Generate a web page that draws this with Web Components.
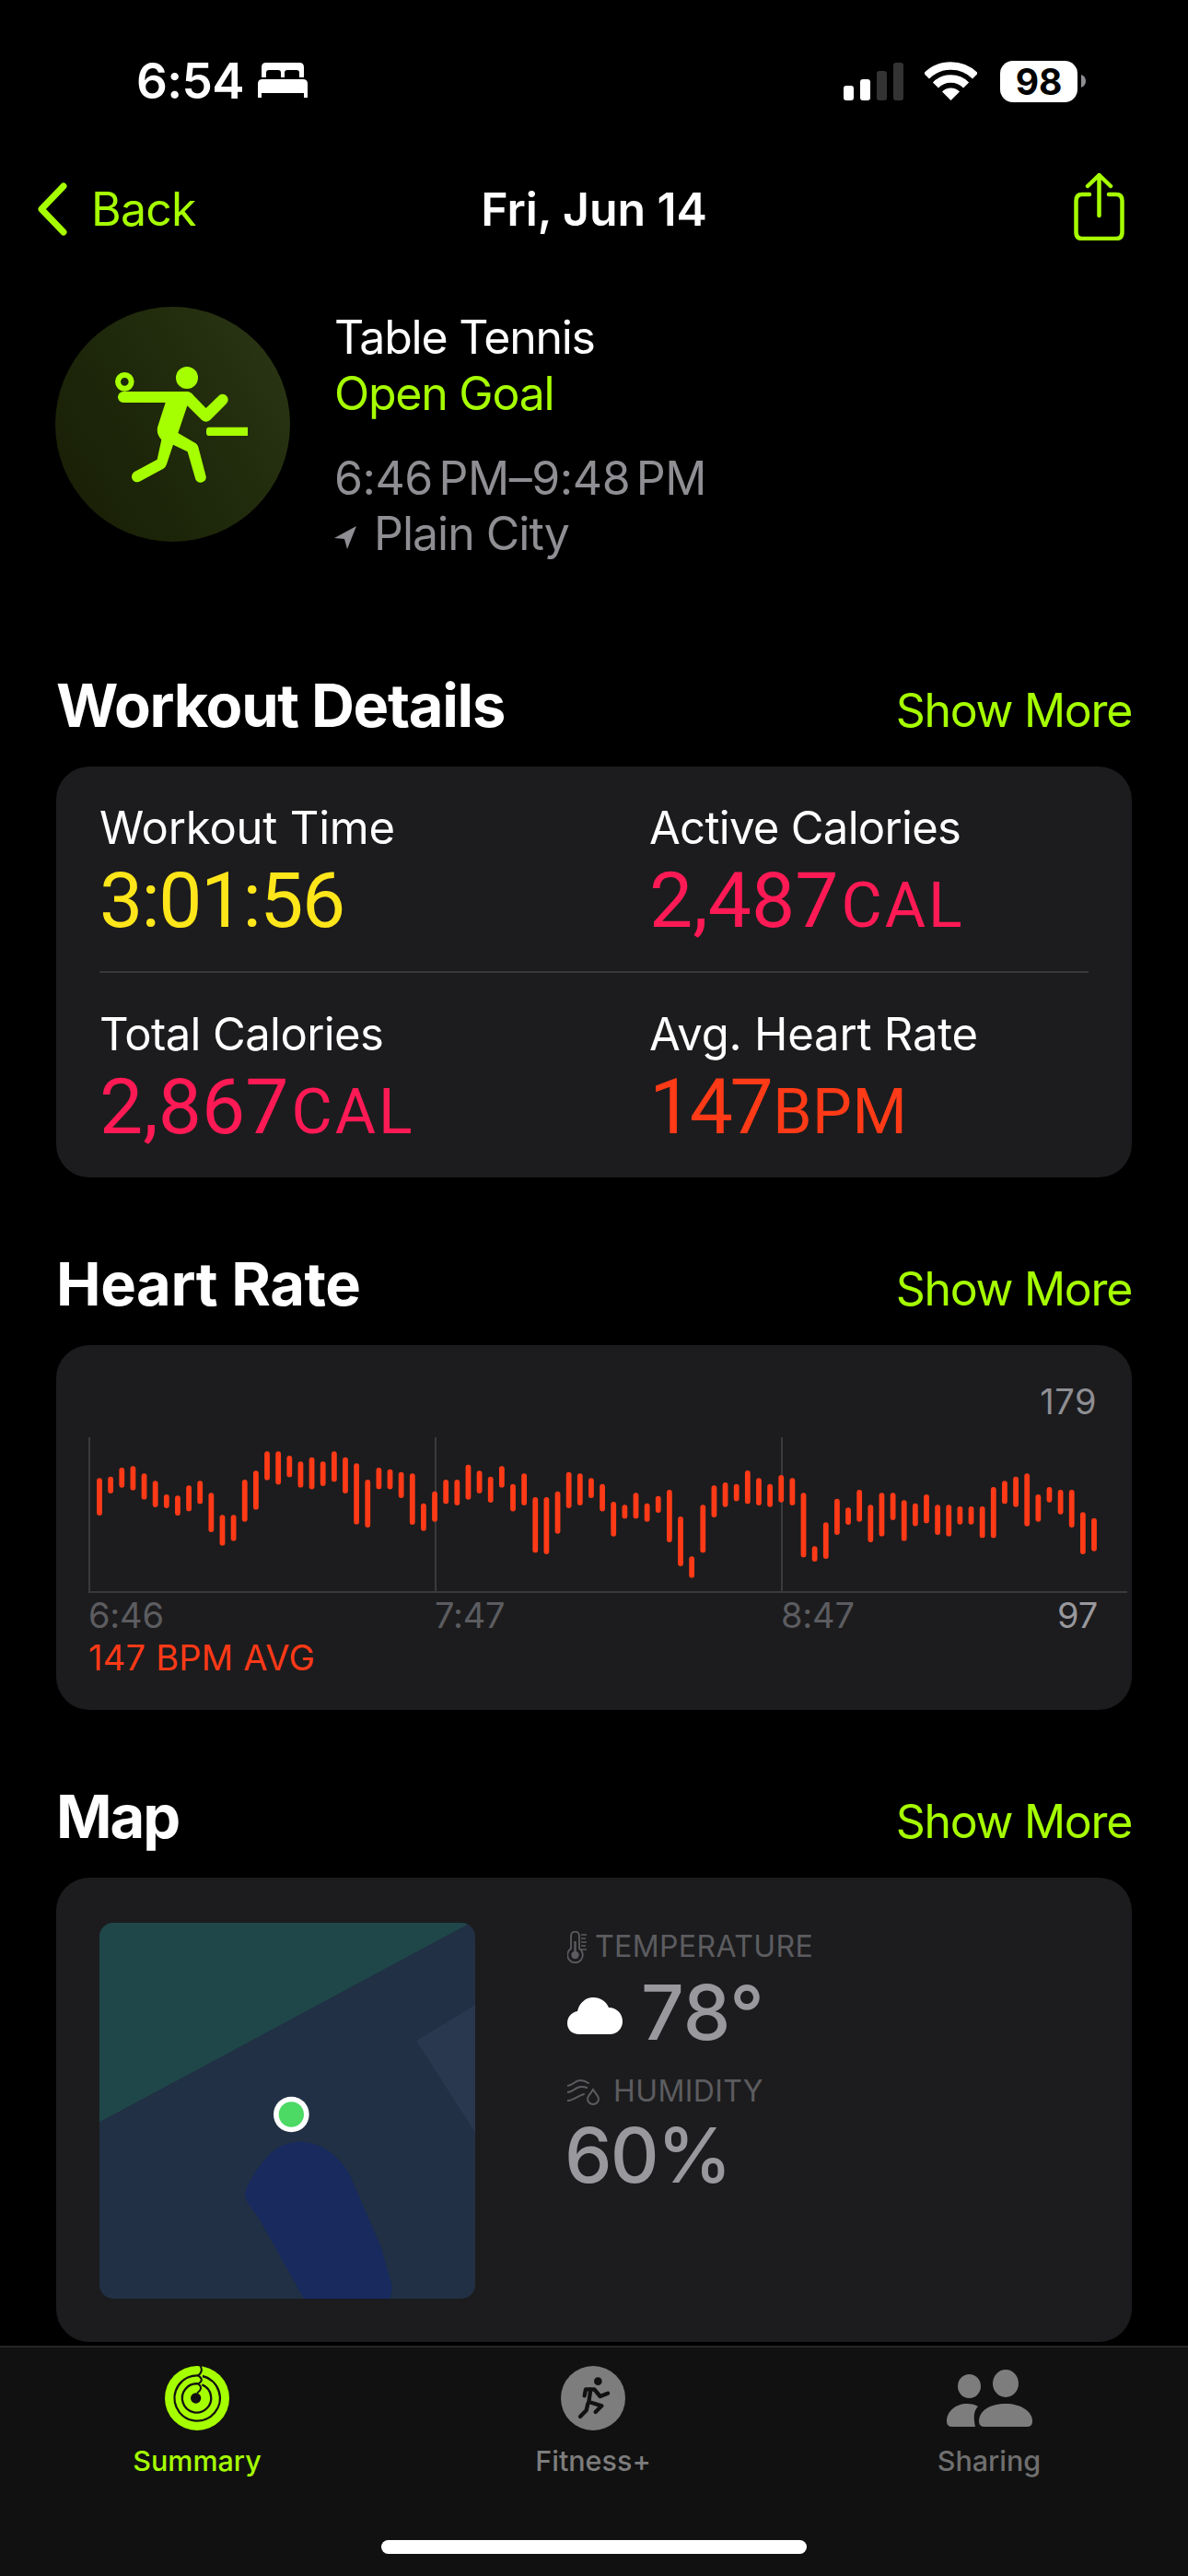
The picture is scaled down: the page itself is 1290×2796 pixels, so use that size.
<!DOCTYPE html>
<html lang="en"><head><meta charset="utf-8"><title>Workout</title>
<style>
html,body{margin:0;padding:0;background:#000}
body{width:1290px;height:2796px;overflow:hidden;font-family:Inter,"Liberation Sans",sans-serif;color:#fff}
app-screen{display:flex}
</style></head><body>
<app-screen>
  <status-bar></status-bar>
  <nav-bar title-text="Fri, Jun 14"></nav-bar>
  <workout-header></workout-header>
  <section-block heading="Workout Details" ls="-1.3px" first><metrics-card></metrics-card></section-block>
  <section-block heading="Heart Rate" ls="-.4px"><heart-chart></heart-chart></section-block>
  <section-block heading="Map" ls="-2px"><map-card></map-card></section-block>
  <tab-bar></tab-bar>
</app-screen>
<script>
const GREEN='#a6ff00';
function def(name,html,init){
  customElements.define(name,class extends HTMLElement{
    connectedCallback(){
      if(this.shadowRoot)return;
      const r=this.attachShadow({mode:'open'});
      r.innerHTML=typeof html==='function'?html(this):html;
      if(init)init(r,this);
    }
  });
}
def('app-screen',`<style>:host{display:flex;flex-direction:column;width:1290px;height:2796px;background:#000}
::slotted(tab-bar){margin-top:auto}</style><slot></slot>`);

def('status-bar',`<style>
:host{display:flex;align-items:center;height:64px;padding:56px 0 0;box-sizing:content-box}
.time{margin-left:148px;font:600 53px/60px Inter,sans-serif;letter-spacing:-.6px;color:#fff;width:132px}
.bed{display:block;margin-top:-2px}
.r{margin-left:auto;display:flex;align-items:center}
.sig{display:block;margin-left:0}
.wifi{display:block;margin-left:23px}
.bat{margin-left:25px;width:84px;height:45px;border-radius:14px;background:#fff;color:#000;font:700 39px/45px Inter,sans-serif;text-align:center;letter-spacing:-.2px}
.cap{display:block;margin:0 111px 0 4px}
</style>
<span class="time">6:54</span>
<svg class="bed" width="54" height="38" viewBox="0 0 54 38"><path fill="#fff" d="M9 0H45Q50 0 50 5V16H45V11Q45 8 42 8H32Q29 8 29 11V16H25V11Q25 8 22 8H12Q9 8 9 11V16H4V5Q4 0 9 0Z"/><path fill="#fff" d="M5 18H49Q54 18 54 23V38H50V33H4V38H0V23Q0 18 5 18Z"/></svg>
<div class="r">
<svg class="sig" width="65" height="41" viewBox="0 0 65 41"><rect x="0" y="25" width="11" height="16" rx="3" fill="#fff"/><rect x="18" y="18" width="11" height="23" rx="3" fill="#fff"/><rect x="36" y="9" width="11" height="32" rx="3" fill="#333"/><rect x="54" y="0" width="11" height="41" rx="3" fill="#333"/></svg>
<svg class="wifi" width="57" height="42" viewBox="0 0 57 42"><path fill="none" stroke="#fff" stroke-width="8.5" d="M2 15.5A37.5 37.5 0 0 1 55 15.5"/><path fill="none" stroke="#fff" stroke-width="8.5" d="M11.9 25.4A23.5 23.5 0 0 1 45.1 25.4"/><path fill="#fff" d="M28.5 42L19 32.5A13.4 13.4 0 0 1 38 32.5Z"/></svg>
<div class="bat">98</div>
<svg class="cap" width="5" height="14" viewBox="0 0 5 14"><path fill="#8e8e93" d="M0 0Q5 2 5 7Q5 12 0 14Z"/></svg>
</div>`);

def('nav-bar',el=>`<style>
:host{display:grid;grid-template-columns:1fr auto 1fr;align-items:center;height:72px;margin-top:71px;padding:0 41px}
.back{display:flex;align-items:center;gap:26px;color:${GREEN};font:400 50px/72px Inter,sans-serif;letter-spacing:-.8px}
.t{font:600 50px/72px Inter,sans-serif;letter-spacing:-.1px;color:#fff}
.share{justify-self:end;display:block;margin:-6px 28px 0 0}
</style>
<div class="back"><svg width="32" height="58" viewBox="0 0 32 58"><path fill="none" stroke="${GREEN}" stroke-width="7" stroke-linecap="round" stroke-linejoin="round" d="M28 4L4 29L28 54"/></svg><span>Back</span></div>
<div class="t">${el.getAttribute('title-text')}</div>
<svg class="share" width="55" height="73" viewBox="0 0 55 73"><path fill="none" stroke="${GREEN}" stroke-width="4.5" stroke-linecap="round" stroke-linejoin="round" d="M17 23H9Q2.5 23 2.5 30V64Q2.5 71 9 71H46Q52.5 71 52.5 64V30Q52.5 23 46 23H38M27.5 46V2M15 14L27.5 2L40 14"/></svg>`);

def('workout-header',`<style>
:host{display:flex;gap:48px;margin-top:70px;padding-left:60px;height:256px}
.ring{width:255px;height:255px;flex:none;display:block}
.col{font:400 50px/61px Inter,sans-serif;letter-spacing:-1.25px;padding-top:3px}
.g{color:${GREEN}}
.m{color:#8e8e93;margin-top:31px;word-spacing:-7px;letter-spacing:-.45px}
.loc{display:flex;align-items:center;gap:19px;color:#8e8e93;margin-top:-1px;letter-spacing:-1px}
.loc svg{display:block;margin-top:8px}
</style>
<svg class="ring" viewBox="60 45 765 765"><defs><linearGradient id="g" x1="0" y1="0.8" x2="1" y2="0.2"><stop offset="0" stop-color="#191f06"/><stop offset=".5" stop-color="#1f290b"/><stop offset="1" stop-color="#2a3514"/></linearGradient></defs><circle cx="442.5" cy="427.5" r="382.5" fill="url(#g)"/>
<circle cx="489" cy="276" r="36" fill="${GREEN}"/><circle cx="286" cy="289" r="22" fill="none" stroke="${GREEN}" stroke-width="18"/>
<path fill="${GREEN}" d="M282 321H490Q502 322 510 333L551 375L592 335A18 18 0 0 1 618 360L565 413Q551 425 537 413L490 367L460 456L518 490Q524 494 526 502L551 597A18 18 0 0 1 517 607L491 517L444 494L423 557Q420 567 412 572L337 613A18 18 0 0 1 317 583L392 542L406 478Q385 455 396 428L419 357H282A18 18 0 0 1 282 321Z"/>
<path fill="${GREEN}" d="M562 437H687V465H562Q552 465 552 455V447Q552 437 562 437Z"/></svg>
<div class="col"><div>Table Tennis</div><div class="g">Open Goal</div><div class="m">6:46 PM–9:48 PM</div>
<div class="loc"><svg width="24" height="25" viewBox="0 0 24 25"><path fill="#8e8e93" d="M24 0L0 13L11 14L14 25Z"/></svg><span>Plain City</span></div></div>`);

def('section-block',el=>`<style>
:host{display:block;margin:75px 61px 0}
:host([first]){margin-top:136px}
.h{display:flex;justify-content:space-between;align-items:baseline;height:80px;box-sizing:border-box;padding-top:1px;margin-bottom:27px}
h2{margin:0;font:700 65px/80px Inter,sans-serif;letter-spacing:${el.getAttribute('ls')};color:#fff}
span{font:400 50px/80px Inter,sans-serif;letter-spacing:-1.3px;color:${GREEN}}
.card{background:#1c1c1e;border-radius:36px;overflow:hidden}
</style>
<div class="h"><h2>${el.getAttribute('heading')}</h2><span>Show More</span></div>
<div class="card"><slot></slot></div>`);

def('metric-item',el=>`<style>
:host{display:block}
.l{font:400 49px/60px Inter,sans-serif;letter-spacing:${el.getAttribute('lls')||'-.2px'};color:#fff}
.v{margin-top:4px;font:400 84px/90px Roboto,sans-serif;color:${el.getAttribute('color')};letter-spacing:${el.getAttribute('ls')||'0'}}
small{font-size:68px;margin-left:${el.getAttribute('um')||'3px'};letter-spacing:${el.getAttribute('uls')||'3px'}}
</style><div class="l">${el.getAttribute('label')}</div><div class="v">${el.getAttribute('value')}${el.getAttribute('unit')?`<small>${el.getAttribute('unit')}</small>`:''}</div>`);

def('metrics-card',`<style>
:host{display:block;height:446px;box-sizing:border-box;padding:37px 47px 0}
.g{display:grid;grid-template-columns:597px 1fr}
hr{border:0;height:2px;background:#38383a;margin:26px 0 37px}
</style>
<div class="g"><metric-item label="Workout Time" value="3:01:56" color="#ffe61a" ls="-1.6px"></metric-item><metric-item label="Active Calories" lls="-.7px" value="2,487" unit="CAL" color="#ff1a55"></metric-item></div>
<hr>
<div class="g"><metric-item label="Total Calories" lls="-.6px" value="2,867" unit="CAL" color="#ff1a55"></metric-item><metric-item label="Avg. Heart Rate" value="147" unit="BPM" color="#ff3a17" ls="-3.5px" um="3px" uls=".5px"></metric-item></div>`);

const B1=[[73,310,432],[105,305,360],[137,276,341],[168,271,350],[200,295,380],[232,319,405],[264,363,408],[295,367,432],[327,334,418],[358,319,394],[390,358,486],[422,430,530],[454,430,515],[485,315,452],[517,286,413],[549,223,317],[580,223,331],[612,237,307],[644,256,341],[676,242,346],[707,256,336],[739,223,322],[771,242,360],[802,262,461],[834,315,471],[866,276,346],[898,281,346],[930,290,375],[961,295,462],[993,392,482],[1025,353,452],[1056,315,394],[1088,315,399],[1120,266,380],[1152,286,360],[1183,305,390],[1215,271,341],[1247,329,418],[1278,295,399],[1310,372,553],[1342,372,558],[1373,353,491],[1405,290,408],[1437,295,399],[1469,310,375],[1500,329,418]];
const B2=[[387,500],[397,442],[358,442],[392,452],[368,423],[348,519],[435,597],[565,635],[397,553],[334,438],[324,404],[329,385],[285,394],[310,399],[329,404],[300,389],[310,399],[358,568],[532,582],[454,573],[377,495],[406,462],[348,452],[397,519],[358,500],[358,447],[382,515],[392,466],[363,457],[397,495],[397,500],[402,461],[402,461],[402,505],[339,505],[319,394],[305,404],[295,467],[363,452],[339,389],[348,428],[348,471],[421,558],[440,548]];
def('heart-chart',()=>{
  const all=[...B1.map(b=>[b[1],b[2]]),...B2];
  const rects=all.map((b,i)=>{
    const cx=12+i*12.135,t=b[0]/3-59,h=(b[1]-b[0])/3;
    return `<rect x="${(cx-2.9).toFixed(2)}" y="${t.toFixed(1)}" width="5.8" height="${h.toFixed(1)}" rx="2.9" fill="#ff3a17"/>`;
  }).join('');
  return `<style>
:host{display:block;height:396px;box-sizing:border-box;padding:38px 0 0;font:400 38px/46px Inter,sans-serif}
.top{text-align:right;padding-right:38px;color:#8e8e93;letter-spacing:.5px}
svg{display:block;margin:16px 0 0 33px}
.lab{display:grid;grid-template-columns:376px 376px 1fr;margin-left:35px;padding-right:37px;color:#5c5c60;letter-spacing:-.2px}
.lab span:last-child{display:flex;justify-content:space-between}
b{font-weight:400;color:#98989d}
.avg{margin-left:35px;color:#ff3a17;letter-spacing:.25px}
</style><div class="top">179</div>
<svg width="1130" height="170" viewBox="-2 0 1130 170"><g fill="#3a3a3c"><rect x="0" y="0" width="2" height="168"/><rect x="376" y="0" width="2" height="168"/><rect x="752" y="0" width="2" height="168"/><rect x="0" y="167" width="1128" height="2"/></g>${rects}</svg>
<div class="lab"><span>6:46</span><span>7:47</span><span><i style="font-style:normal">8:47</i><b>97</b></span></div>
<div class="avg">147 BPM AVG</div>`;
});

def('map-card',`<style>
:host{display:flex;height:504px;box-sizing:border-box;padding:49px 47px 47px;gap:100px}
.map{display:block;width:408px;height:408px;flex:none;border-radius:15px}
.col{padding-top:6px;color:#98989d}
.lb{display:flex;align-items:center;gap:9px;height:40px;font:400 32px/40px Inter,sans-serif;color:#5c5c60;letter-spacing:.4px}
.val{font:500 82px/90px Inter,sans-serif;letter-spacing:0;display:flex;align-items:center;gap:20px}
.t{margin-top:7px}.h2{margin-top:20px}.h3{margin-top:5px;margin-left:-3px;letter-spacing:-2px}
.lb.hu{gap:15px}
</style>
<svg class="map" viewBox="84 138 1224 1224"><rect x="84" y="138" width="1224" height="1224" fill="#213044"/><path fill="#1f4749" d="M84 138H1293L84 787Z"/><path fill="#29374f" d="M1308 405L1116 522L1308 822Z"/><path fill="#182a5e" d="M750 1362L600 1095Q555 1040 558 1020Q570 970 630 900Q670 855 735 850Q840 855 900 960L1000 1190L1035 1310Q1040 1340 1030 1362Z"/><circle cx="709" cy="762" r="58" fill="#fff"/><circle cx="709" cy="762" r="41" fill="#4cd964"/></svg>
<div class="col">
<div class="lb"><svg width="21" height="35" viewBox="0 0 21 35" fill="none" stroke="#5c5c60"><path stroke-width="1.8" d="M4 19V5A4.5 4.5 0 0 1 13 5V19A8.3 8.3 0 1 1 4 19Z"/><circle cx="8.5" cy="26" r="4.2" fill="#5c5c60" stroke="none"/><path stroke-width="2.4" d="M8.5 24V11"/><path stroke-width="1.5" d="M15 4H21M15 8H20M15 12H21M15 16H20M15 20H21"/></svg><span>TEMPERATURE</span></div>
<div class="val t"><svg width="60" height="40" viewBox="0 0 60 40" style="margin-top:6px"><path fill="#fff" d="M13 40C5 40 0 35 0 28C0 21 5 16 11 15C13 6 20 0 28 0C36 0 42 4 45 11C54 11 60 18 60 26C60 34 54 40 46 40Z"/></svg><span>78°</span></div>
<div class="lb hu h2"><svg width="35" height="29" viewBox="0 0 35 29" fill="none" stroke="#5c5c60" stroke-width="2" stroke-linecap="round"><path d="M0 8C6 8 8 2 14 2C18 2 20 3 23 5"/><path d="M0 15C6 15 9 9 15 9C17 9 19 9 21 10"/><path d="M0 24C6 24 9 20 18 17"/><path d="M28 12C25 17 22 19 22 22A6 6 0 0 0 34 22C34 19 31 17 28 12Z"/></svg><span>HUMIDITY</span></div>
<div class="val h3">60%</div>
</div>`);

def('tab-item',el=>`<style>
:host{display:flex;flex-direction:column;align-items:center;width:300px;color:${el.getAttribute('color')};font:500 30.5px/40px Inter,sans-serif}
.i{height:70px;display:flex;align-items:center;justify-content:center}
span{margin-top:13px}
</style><div class="i"><slot></slot></div><span>${el.getAttribute('label')}</span>`);

def('tab-bar',`<style>
:host{display:block;height:250px;box-sizing:border-box;background:#111;border-top:2px solid #262627;padding-top:20px}
.row{display:flex;justify-content:flex-start;padding-left:64px;gap:130px}
.home{width:462px;height:15px;border-radius:8px;background:#fff;margin:66px auto 0}
svg{display:block}
</style><div class="row">
<tab-item label="Summary" color="${GREEN}"><svg width="70" height="70" viewBox="27 25 210 210"><circle cx="132" cy="130" r="105" fill="${GREEN}"/><g fill="none" stroke="#111" stroke-width="7"><path d="M136 56A74 74 0 1 0 150 58"/><path d="M136 83A47 47 0 1 0 148 86"/><path stroke-width="6" stroke-linecap="round" d="M143 26C150 38 146 48 136 56C150 66 150 75 136 83C148 92 146 104 134 112"/></g><circle cx="128" cy="130" r="17" fill="#111"/></svg></tab-item>
<tab-item label="Fitness+" color="#7d7d7d"><svg width="70" height="70" viewBox="27 25 210 210"><circle cx="132" cy="130" r="105" fill="#7d7d7d"/><circle cx="148" cy="75" r="13" fill="#111"/><g fill="none" stroke="#111" stroke-width="13" stroke-linecap="round" stroke-linejoin="round"><path d="M104 122L108 101H136L155 124L180 114"/><path d="M124 102L118 142L160 155L140 175"/><path d="M115 148L110 170L90 190"/></g></svg></tab-item>
<tab-item label="Sharing" color="#6f6f6f"><svg width="93" height="62" viewBox="0 0 93 62"><g fill="#7d7d7d"><ellipse cx="24.5" cy="18" rx="12.5" ry="13"/><ellipse cx="64" cy="15" rx="14" ry="15"/><path d="M35 56C35 44 48 37 64 37C80 37 93 45 93 56Q93 62 87 62H41Q35 62 35 56Z"/><path d="M0 56C0 45 10 37 22 37C27 37 31 38 34 40C29 45 29 52 31 62H6Q0 62 0 56Z"/></g></svg></tab-item>
</div><div class="home"></div>`);
</script>
</body></html>
